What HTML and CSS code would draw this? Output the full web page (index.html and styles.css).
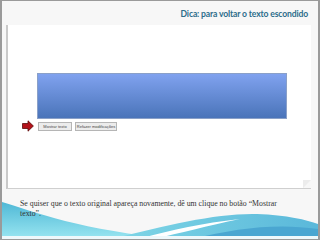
FILE: index.html
```html
<!DOCTYPE html>
<html>
    <head>
        <meta charset="UTF-8">
        <meta name="viewport" content="width = device-width, initial-scale = 1.0">
        <title> Dica </title>
        <link rel="stylesheet" href="styles.css">
    </head>

    <body>
        <div class="slide">
  <!--   decorative wave at the bottom   -->
  <svg class="wave" width="316" height="40" viewBox="0 200 316 40">
    <defs>
      <linearGradient id="light" x1="0" y1="0" x2="0" y2="1">
        <stop offset="0" stop-color="#4fb8d6"/>
        <stop offset="1" stop-color="#9ae6f1"/>
      </linearGradient>
      <linearGradient id="deep" x1="0" y1="0" x2="1" y2="0">
        <stop offset="0" stop-color="#7fd6e6"/>
        <stop offset="1" stop-color="#5ab8da"/>
      </linearGradient>
    </defs>
    <path d="M0,203 C30,212 80,232 175,240 L0,240 Z" fill="url(#light)"/>
    <path d="M110,240 C165,226 215,214 255,215 C285,216 305,221 316,225 L316,240 Z" fill="url(#deep)"/>
    <path d="M190,240 C235,229 275,224 316,230 L316,240 Z" fill="#4aa6d1"/>
    <path d="M140,239 C170,231 200,224 238,220 C205,227 178,234 152,240 Z" fill="#fff"/>
    <rect x="0" y="237" width="316" height="3" fill="#eef8fb"/>
  </svg>

  <div class="title">Dica: para voltar o texto escondido</div>

  <div class="panel">
    <div class="editor"></div>
    <div class="row">
      <svg class="arrow" width="12" height="12" viewBox="0 0 12 12">
        <path d="M0.5,3.5 H6 V0.8 L11.4,6 L6,11.2 V8.5 H0.5 Z" fill="#b3121a" stroke="#5a0a0a" stroke-width="0.8"/>
      </svg>
      <button class="btn show">Mostrar texto</button>
      <button class="btn redo">Refazer modificações</button>
    </div>
    <span class="curl"></span>
  </div>

  <p class="note">Se quiser que o texto original apareça novamente, dê um clique no botão “Mostrar texto”.</p>
</div>
    </body>
</html>
```

FILE: styles.css
```css
body {
  margin: 0;
  background: #fff;
}

.slide {
  position: relative;
  width: 320px;
  height: 240px;
  box-sizing: border-box;
  border: 1px solid #9a9a9a;
  border-left-width: 2px;
  border-right-width: 2px;
  background: #f7f7f7;
  overflow: hidden;
}

.wave {
  position: absolute;
  left: 0;
  bottom: 0;
}

.title {
  height: 24px;
  box-sizing: border-box;
  padding: 7px 10px 0 0;
  text-align: right;
  font-family: "Lato", sans-serif;
  font-weight: bold;
  font-size: 8.6px;
  letter-spacing: -0.15px;
  line-height: 12px;
  color: #2c6d8b;
}

.panel {
  position: relative;
  margin-left: 4px;
  width: 305px;
  height: 164px;
  box-sizing: border-box;
  padding: 48px 0 0 14px;
  background: #fff;
  border-left: 2px solid #c9c9c9;
  border-bottom: 1px solid #cfcfcf;
}

.editor {
  margin-left: 15px;
  width: 250px;
  height: 46px;
  background: linear-gradient(#80a2ef, #4a74b9);
  border: 1px solid #8aa0c8;
  box-sizing: border-box;
}

.row {
  display: flex;
  align-items: center;
  margin-top: 1px;
}

.arrow {
  margin-right: 4px;
}

.btn {
  height: 9px;
  margin: 0 3px 0 0;
  padding: 0;
  border: 1px solid #b5b5b5;
  border-radius: 0;
  background: #ececec;
  font-family: "Liberation Sans", sans-serif;
  font-size: 4px;
  line-height: 7px;
  color: #444;
  white-space: nowrap;
  overflow: hidden;
}

.show {
  width: 34px;
}

.redo {
  width: 42px;
}

.curl {
  position: absolute;
  right: 0;
  bottom: 0;
  width: 0;
  height: 0;
  border-left: 4px solid #ececec;
  border-top: 4px solid #ececec;
  border-right: 4px solid #f7f7f7;
  border-bottom: 4px solid #f7f7f7;
}

.note {
  position: relative;
  margin: 0;
  padding: 10px 30px 0 18px;
  font-family: "Liberation Serif", serif;
  font-size: 7.8px;
  line-height: 10px;
  color: #333;
}
```
